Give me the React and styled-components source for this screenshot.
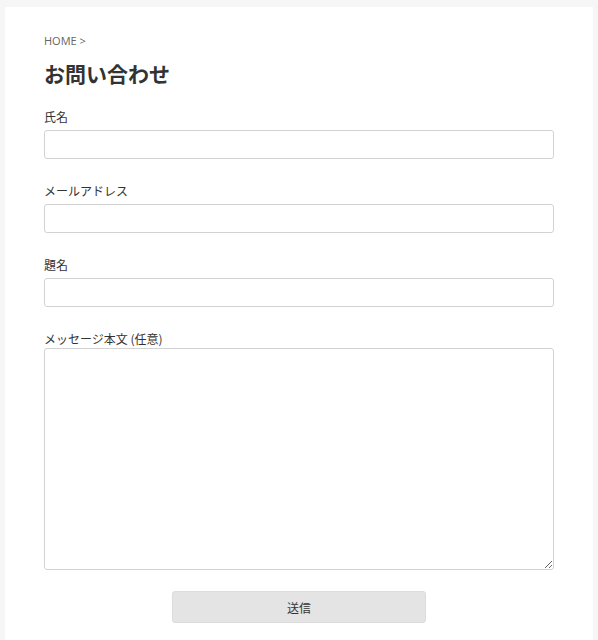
import React from "react";
import styled, { createGlobalStyle } from "styled-components";

const GlobalStyle = createGlobalStyle`
  * { box-sizing: border-box; }
  body {
    margin: 0;
    background: #f6f6f6;
    font-family: "Open Sans", "Noto Sans CJK JP", sans-serif;
    color: #333;
  }
`;

const Page = styled.div`
  padding-top: 7px;
  min-height: 640px;
`;

const Card = styled.main`
  margin: 0 5px;
  background: #fff;
  padding: 26px 39px 20px;
`;

const Breadcrumb = styled.div`
  font-size: 11px;
  line-height: 16px;
  color: #666;
`;

const Title = styled.h1`
  margin: 9px 0 0;
  font-size: 21px;
  line-height: 30px;
  font-weight: 700;
  color: #333;
  font-family: "Noto Sans CJK JP", sans-serif;
`;

const Form = styled.form`
  display: flex;
  flex-direction: column;
  margin-top: 20px;
`;

const Field = styled.div`
  display: flex;
  flex-direction: column;
  margin-bottom: ${(p) => (p.$last ? "21px" : "23px")};
`;

const Label = styled.label`
  font-size: 12px;
  line-height: 18px;
  color: #333;
  font-family: "Noto Sans CJK JP", sans-serif;
  margin-bottom: ${(p) => (p.$tight ? "0" : "4px")};
`;

const Input = styled.input`
  width: 100%;
  height: 29px;
  border: 1px solid #d2d2d2;
  border-radius: 3px;
  background: #fff;
  padding: 0 6px;
  font-size: 13px;
  outline: none;
`;

const TextArea = styled.textarea`
  width: 100%;
  height: 222px;
  border: 1px solid #d2d2d2;
  border-radius: 3px;
  background: #fff;
  padding: 6px;
  font-size: 13px;
  resize: vertical;
  outline: none;
  display: block;
`;

const Actions = styled.div`
  display: flex;
  justify-content: center;
`;

const Button = styled.button`
  width: 254px;
  height: 32px;
  border: 1px solid #dcdcdc;
  border-radius: 3px;
  background: #e4e4e4;
  color: #333;
  font-size: 12px;
  font-family: "Noto Sans CJK JP", sans-serif;
  cursor: pointer;
`;

const fields = [
  { id: "name", label: "氏名" },
  { id: "email", label: "メールアドレス" },
  { id: "subject", label: "題名" },
];

export default function App() {
  return (
    <Page>
      <GlobalStyle />
      <Card>
        <Breadcrumb>HOME &gt;</Breadcrumb>
        <Title>お問い合わせ</Title>
        <Form onSubmit={(e) => e.preventDefault()}>
          {fields.map((f) => (
            <Field key={f.id}>
              <Label htmlFor={f.id}>{f.label}</Label>
              <Input id={f.id} type="text" />
            </Field>
          ))}
          <Field $last>
            <Label htmlFor="message" $tight>
              メッセージ本文 (任意)
            </Label>
            <TextArea id="message" />
          </Field>
          <Actions>
            <Button type="submit">送信</Button>
          </Actions>
        </Form>
      </Card>
    </Page>
  );
}
